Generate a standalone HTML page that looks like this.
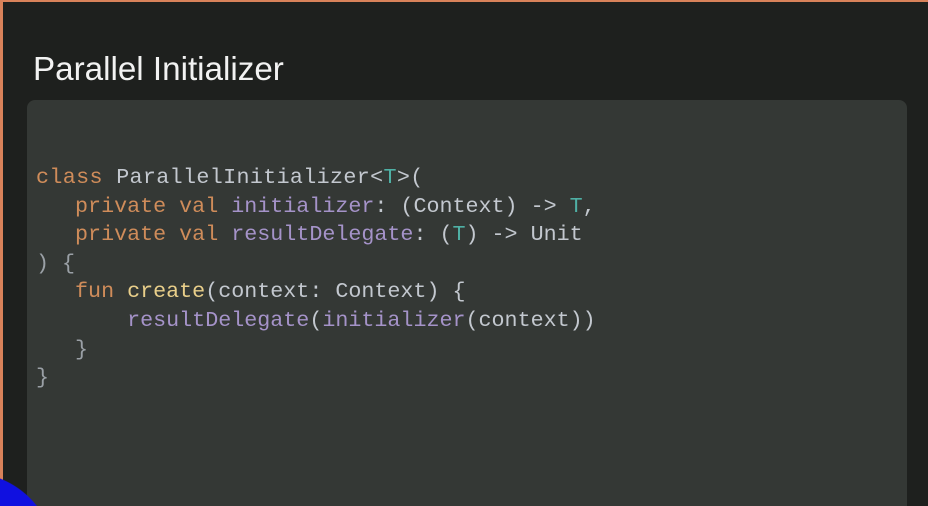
<!DOCTYPE html>
<html><head><style>
html,body{margin:0;padding:0;width:928px;height:506px;overflow:hidden}
body{background:#1e201e;position:relative;font-family:"Liberation Sans",sans-serif}
.bt{position:absolute;left:0;top:0;width:928px;height:2px;background:#d9825a}
.bl{position:absolute;left:0;top:0;width:3px;height:506px;background:#d9825a}
h1{position:absolute;left:33px;top:50px;margin:0;font-weight:normal;font-size:33.2px;color:#f2f2f2;line-height:40px}
.box{position:absolute;left:27px;top:100px;width:880px;height:406px;background:#343835;border-radius:8px 8px 0 0}
pre{position:absolute;left:36px;top:164px;margin:0;font-family:"Liberation Mono",monospace;font-size:21.7px;line-height:28.6px;color:#c3c8cf}
.l1{letter-spacing:0.35px}
.k{color:#cf8c5a}.t{color:#4fb0a5}.p{color:#a593c9}.f{color:#e9cf8a}.g{color:#9aa0a6}
.blue{position:absolute;left:0;top:470px;width:60px;height:36px;background:radial-gradient(circle 88px at -32px 90px,#1010e0 99%,transparent 100%)}
</style></head><body>
<div class="bt"></div><div class="bl"></div>
<h1>Parallel Initializer</h1>
<div class="box"></div>
<pre><span class="l1"><span class="k">class</span> ParallelInitializer&lt;<span class="t">T</span>&gt;(</span>
   <span class="k">private val</span> <span class="p">initializer</span>: (Context) -&gt; <span class="t">T</span>,
   <span class="k">private val</span> <span class="p">resultDelegate</span>: (<span class="t">T</span>) -&gt; Unit
<span class="g">) {</span>
   <span class="k">fun</span> <span class="f">create</span>(context: Context) {
       <span class="p">resultDelegate</span>(<span class="p">initializer</span>(context))
   <span class="g">}</span>
<span class="g">}</span></pre>
<div class="blue"></div>
</body></html>
